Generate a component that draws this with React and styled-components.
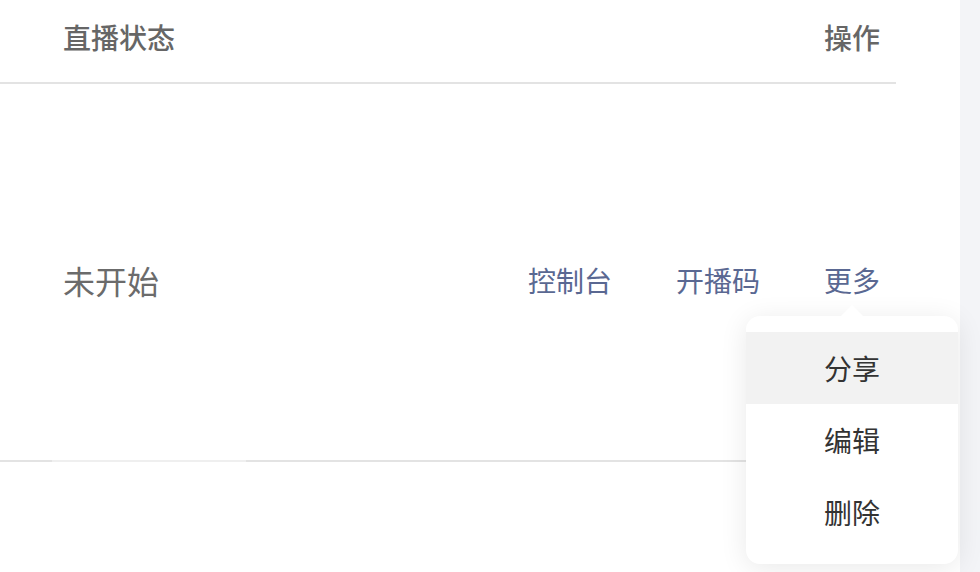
import React from "react";
import styled, { createGlobalStyle } from "styled-components";

const GlobalStyle = createGlobalStyle`
  html, body {
    margin: 0;
    padding: 0;
    background: #ffffff;
    font-family: "Noto Sans CJK SC", "Noto Sans", sans-serif;
  }
`;

const actions = ["控制台", "开播码"];
const menuItems = ["分享", "编辑", "删除"];

const App = () => {
  return (
    <Page>
      <GlobalStyle />
      <Main>
        <Table>
          <HeadRow>
            <HeadCell>直播状态</HeadCell>
            <HeadCell>操作</HeadCell>
          </HeadRow>
          <BodyRow>
            <StatusCell>未开始</StatusCell>
            <Actions>
              {actions.map((a) => (
                <ActionLink key={a}>{a}</ActionLink>
              ))}
              <MoreWrap>
                <ActionLink>更多</ActionLink>
                <Dropdown>
                  {menuItems.map((item, i) => (
                    <MenuItem key={item} active={i === 0}>
                      {item}
                    </MenuItem>
                  ))}
                </Dropdown>
              </MoreWrap>
            </Actions>
          </BodyRow>
        </Table>
      </Main>
      <SideStrip />
    </Page>
  );
};

const Page = styled.div`
  display: flex;
  width: 980px;
  height: 572px;
  overflow: hidden;
`;

const Main = styled.div`
  width: 960px;
  height: 100%;
  background: #fff;
`;

const SideStrip = styled.div`
  width: 20px;
  height: 100%;
  background: #f3f4f7;
`;

const Table = styled.div`
  width: 896px;
`;

const HeadRow = styled.div`
  display: flex;
  justify-content: space-between;
  align-items: center;
  height: 84px;
  box-sizing: border-box;
  padding: 0 16px 8px 63px;
  border-bottom: 2px solid #e3e3e3;
`;

const HeadCell = styled.div`
  font-size: 28px;
  font-weight: 500;
  color: #666;
  line-height: 40px;
`;

const BodyRow = styled.div`
  display: flex;
  justify-content: space-between;
  align-items: center;
  height: 378px;
  box-sizing: border-box;
  padding: 176px 16px 0 63px;
  align-items: flex-start;
  background: linear-gradient(
      to right,
      #e3e3e3 0,
      #e3e3e3 52px,
      #efefef 52px,
      #efefef 246px,
      #e3e3e3 246px
    )
    left bottom / 100% 2px no-repeat;
`;

const StatusCell = styled.div`
  font-size: 32px;
  color: #6b6b6b;
  line-height: 40px;
`;

const Actions = styled.div`
  display: flex;
  align-items: center;
  gap: 64px;
`;

const ActionLink = styled.span`
  font-size: 28px;
  line-height: 40px;
  color: #5a6892;
  cursor: pointer;
`;

const MoreWrap = styled.div`
  position: relative;
`;

const Dropdown = styled.div`
  position: absolute;
  top: 56px;
  left: 50%;
  transform: translateX(-50%);
  width: 212px;
  box-sizing: border-box;
  padding: 16px 0;
  background: #fff;
  border-radius: 14px;
  box-shadow: 0 4px 28px rgba(0, 0, 0, 0.09);
  z-index: 10;

  &::before {
    content: "";
    position: absolute;
    top: -11px;
    left: 50%;
    margin-left: -12px;
    border-left: 12px solid transparent;
    border-right: 12px solid transparent;
    border-bottom: 12px solid #fff;
  }
`;

const MenuItem = styled.div`
  height: 72px;
  display: flex;
  align-items: center;
  justify-content: center;
  font-size: 28px;
  color: #333;
  background: ${({ active }) => (active ? "#f2f2f2" : "transparent")};
`;

export default App;
